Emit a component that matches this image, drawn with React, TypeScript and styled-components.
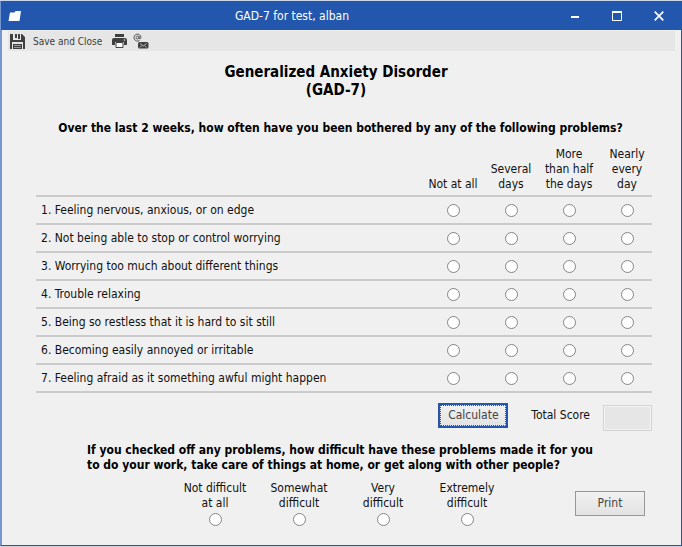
import React, { useState } from "react";
import styled, { createGlobalStyle, css } from "styled-components";

const GlobalStyle = createGlobalStyle`
  * { box-sizing: border-box; }
  body {
    margin: 0;
    background: #c9d6ea;
    color: #111;
    font-family: Tahoma, "DejaVu Sans Condensed", "DejaVu Sans", sans-serif;
    font-size: 12px;
    line-height: 15px;
  }
  button, input { font: inherit; color: inherit; }
`;

const Page = styled.div`
  min-height: 100vh;
  padding: 1px 0;
  display: flex;
  flex-direction: column;
`;

const Window = styled.main`
  flex: 1;
  display: flex;
  flex-direction: column;
  background: #f0f0f0;
  border: 1px solid #2257ad;
  border-left: 2px solid #7596d1;
`;

const TitleBar = styled.header`
  display: grid;
  grid-template-columns: 1fr auto 1fr;
  align-items: center;
  height: 28px;
  flex: none;
  margin-left: -1px;
  padding: 0 1px 0 7px;
  background: #2257ad;
  color: #fff;
`;

const WindowTitle = styled.h1`
  margin: 0;
  padding-right: 104px;
  font-size: 12px;
  line-height: 15px;
  font-weight: 400;
`;

const WindowControls = styled.div`
  display: flex;
  justify-content: flex-end;
  margin-left: -104px;
`;

const WindowButton = styled.button`
  display: grid;
  place-items: center;
  width: 42px;
  height: 26px;
  padding: 0;
  border: 0;
  background: none;
`;

const Toolbar = styled.nav`
  display: flex;
  align-items: center;
  flex: none;
  height: 20px;
  margin: 1px 6px 0;
  padding-left: 2px;
  gap: 6px;
  background: #e6e6e6;
`;

const ToolButton = styled.button`
  display: flex;
  align-items: center;
  gap: 8px;
  padding: 0;
  border: 0;
  background: none;
  color: #404040;
  font-size: 10px;
`;

const SaveButton = styled(ToolButton)`
  margin-right: 4px;
`;

const Form = styled.form`
  padding: 12px 29px 0 34px;
`;

const Heading = styled.h2`
  margin: 0 0 22px;
  padding-right: 16px;
  text-align: center;
  font-size: 15px;
  line-height: 18px;
  font-weight: 700;
  color: #000;
`;

const Prompt = styled.p`
  margin: 0;
  font-weight: 700;
  color: #000;
`;

const CenteredPrompt = styled(Prompt)`
  text-align: center;
  padding-right: 7px;
`;

const Questions = styled.table`
  width: 100%;
  margin-top: 11px;
  table-layout: fixed;
  border-collapse: collapse;
  tr { border-bottom: 2px solid #cbcbcb; }
`;

const Column = styled.col<{ $wide?: boolean }>`
  width: ${(p) => (p.$wide ? 66 : 50)}px;
`;

const ColumnHead = styled.th`
  padding: 0 0 3px;
  vertical-align: bottom;
  font-weight: 400;
  white-space: pre;
  text-align: center;
`;

const QuestionText = styled.th`
  height: 28px;
  padding: 0 0 0 5px;
  text-align: left;
  font-weight: 400;
`;

const AnswerCell = styled.td`
  padding: 0;
  text-align: center;
`;

const Radio = styled.input.attrs({ type: "radio" })`
  appearance: none;
  display: block;
  width: 13px;
  height: 13px;
  margin: 0 auto;
  border: 1px solid #858585;
  border-radius: 50%;
  background: #fff;
  &:checked { background: radial-gradient(circle, #333 3px, #fff 4px); }
`;

const ScoreRow = styled.div`
  display: flex;
  justify-content: flex-end;
  align-items: flex-start;
  margin-top: 10px;
`;

const PushButton = styled.button<{ $default?: boolean }>`
  width: 70px;
  height: 25px;
  padding: 0;
  border: 1px solid #989898;
  background: linear-gradient(#f1f1f1, #e3e3e3);
  color: #444;
  ${(p) =>
    p.$default &&
    css`
      border: 2px solid #2257ad;
      outline: 1px dotted #2257ad;
      outline-offset: -3px;
    `}
`;

const ScoreLabel = styled.label`
  margin: 5px 13px 0 23px;
`;

const ScoreBox = styled.input`
  width: 49px;
  height: 26px;
  margin-top: 2px;
  border: 1px solid #d3d3d3;
  box-shadow: inset 0 0 0 1px #f3f3f3;
  background: #e6e6e6;
  text-align: center;
`;

const FollowUp = styled.section`
  margin: 12px 0 0 51px;
`;

const FollowUpRow = styled.div`
  display: flex;
  justify-content: space-between;
  align-items: center;
  margin-top: 8px;
  padding: 0 7px 0 86px;
`;

const Choices = styled.div`
  display: flex;
`;

const Choice = styled.label`
  width: 84px;
  text-align: center;
  white-space: pre;
  ${Radio} { margin-top: 2px; }
`;

const questions = [
  "Feeling nervous, anxious, or on edge",
  "Not being able to stop or control worrying",
  "Worrying too much about different things",
  "Trouble relaxing",
  "Being so restless that it is hard to sit still",
  "Becoming easily annoyed or irritable",
  "Feeling afraid as it something awful might happen",
];

const answers = ["Not at all", "Several\ndays", "More\nthan half\nthe days", "Nearly\nevery\nday"];
const difficulties = ["Not difficult\nat all", "Somewhat\ndifficult", "Very\ndifficult", "Extremely\ndifficult"];

const FolderIcon = () => (
  <svg width="14" height="12" viewBox="0 0 14 12" aria-hidden="true">
    <path d="M2 2.500h4.500l1-1.500h5.500l-1.500 10H.5z" fill="#fff" />
  </svg>
);

const SaveIcon = () => (
  <svg width="15" height="15" viewBox="0 0 15 15" aria-hidden="true">
    <path d="M0 0h3v6h8V0h1l3 3v12h-2V8H2v7H0zM5 0h2v4H5zM8 0h2v5H8zM3 10h9v5H3z" fill="#404040" />
    <path d="M4 11.500h7M4 13.500h7" stroke="#999" />
  </svg>
);

const PrintIcon = () => (
  <svg width="15" height="14" viewBox="0 0 15 14" aria-hidden="true">
    <path d="M3 0h9v3H3zM2 4h11a2 2 0 0 1 2 2v5h-3V8H3v3H0V6a2 2 0 0 1 2-2z" fill="#404040" />
    <path d="M4 8.500h7v5H4z" fill="#fff" stroke="#404040" />
    <circle cx="12.500" cy="6" r=".8" fill="#e6e6e6" />
  </svg>
);

const MailIcon = () => (
  <svg width="16" height="16" viewBox="0 0 16 16" aria-hidden="true" fill="none">
    <g stroke="#555">
      <circle cx="4.500" cy="4.500" r="1.500" />
      <path d="M6 3v2.500q1.800.8 2-1A3.500 3.500 0 1 0 6.500 7.500" />
    </g>
    <rect x="5" y="9" width="10.500" height="6.500" rx="1.500" fill="#404040" />
    <path d="M7 10.500l3.200 2.500 3.300-2.500M7 14.500l2-2M13.500 14.500l-2-2" stroke="#ccc" strokeWidth=".8" />
  </svg>
);

export default function App() {
  const [picked, setPicked] = useState<Record<number, number>>({});
  const [score, setScore] = useState("");
  const calculate = () => setScore(String(Object.values(picked).reduce((a, b) => a + b, 0)));

  return (
    <Page>
      <GlobalStyle />
      <Window>
        <TitleBar>
          <FolderIcon />
          <WindowTitle>GAD-7 for test, alban</WindowTitle>
          <WindowControls>
            <WindowButton aria-label="Minimize">
              <svg width="10" height="10" stroke="#fff" strokeWidth="2"><path d="M1 6h8" /></svg>
            </WindowButton>
            <WindowButton aria-label="Maximize">
              <svg width="10" height="10" stroke="#fff" fill="none"><path d="M.5 1v8.500h9V1" /><path d="M0 1h10" strokeWidth="2" /></svg>
            </WindowButton>
            <WindowButton aria-label="Close">
              <svg width="10" height="10" stroke="#fff" strokeWidth="1.700"><path d="M.7.7l8.600 8.600M9.300.7L.7 9.300" /></svg>
            </WindowButton>
          </WindowControls>
        </TitleBar>
        <Toolbar aria-label="Form actions">
          <SaveButton type="button"><SaveIcon />Save and Close</SaveButton>
          <ToolButton type="button" aria-label="Print form"><PrintIcon /></ToolButton>
          <ToolButton type="button" aria-label="Send by e-mail"><MailIcon /></ToolButton>
        </Toolbar>
        <Form>
          <Heading>Generalized Anxiety Disorder<br />(GAD-7)</Heading>
          <CenteredPrompt>
            Over the last 2 weeks, how often have you been bothered by any of the following problems?
          </CenteredPrompt>
          <Questions>
            <colgroup>
              <col />
              <Column $wide />
              <Column />
              <Column $wide />
              <Column />
            </colgroup>
            <thead>
              <tr>
                <td />
                {answers.map((a) => <ColumnHead key={a} scope="col">{a}</ColumnHead>)}
              </tr>
            </thead>
            <tbody>
              {questions.map((q, i) => (
                <tr key={q}>
                  <QuestionText scope="row">{i + 1}. {q}</QuestionText>
                  {answers.map((a, v) => (
                    <AnswerCell key={a}>
                      <Radio
                        name={`q${i}`}
                        aria-label={`${q}: ${a.replace(/\n/g, " ")}`}
                        checked={picked[i] === v}
                        onChange={() => setPicked({ ...picked, [i]: v })}
                      />
                    </AnswerCell>
                  ))}
                </tr>
              ))}
            </tbody>
          </Questions>
          <ScoreRow>
            <PushButton type="button" $default onClick={calculate}>Calculate</PushButton>
            <ScoreLabel htmlFor="total">Total Score</ScoreLabel>
            <ScoreBox id="total" readOnly value={score} />
          </ScoreRow>
          <FollowUp>
            <Prompt>
              If you checked off any problems, how difficult have these problems made it for you<br />
              to do your work, take care of things at home, or get along with other people?
            </Prompt>
            <FollowUpRow>
              <Choices role="radiogroup" aria-label="Difficulty">
                {difficulties.map((d) => (
                  <Choice key={d}>{d}<Radio name="difficulty" /></Choice>
                ))}
              </Choices>
              <PushButton type="button">Print</PushButton>
            </FollowUpRow>
          </FollowUp>
        </Form>
      </Window>
    </Page>
  );
}
